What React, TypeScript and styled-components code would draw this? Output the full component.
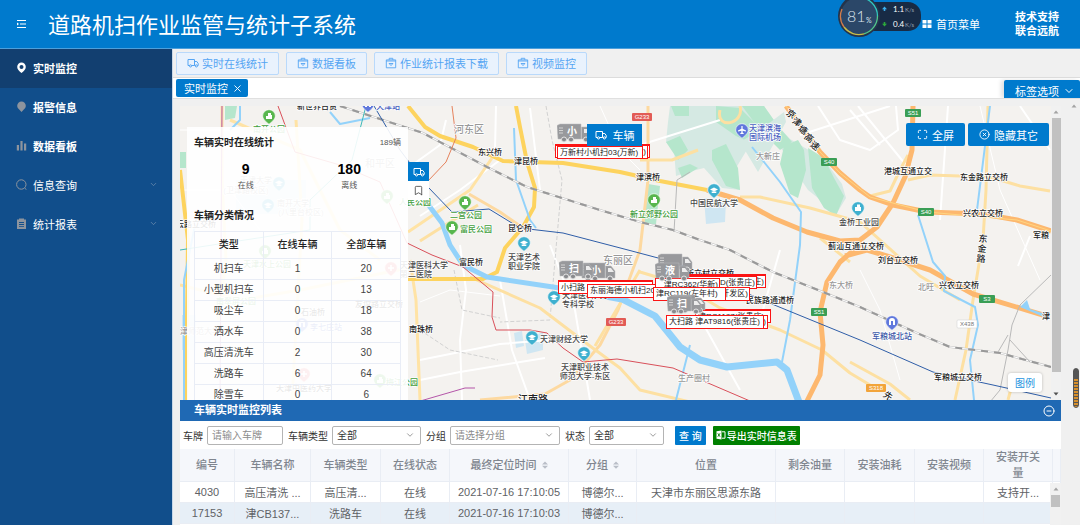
import React from 'react';
import styled, { createGlobalStyle, css } from 'styled-components';
import { ChevronDown, CircleX, CircleMinus, Maximize, Truck, X, Bookmark } from 'lucide-react';

const BLUE = '#007acd';
const FONT = '"Liberation Sans", "Noto Sans CJK SC", sans-serif';

const GlobalStyle = createGlobalStyle`
  *, *::before, *::after { box-sizing: border-box; }
  body { margin: 0; font-family: ${FONT}; font-size: 11px; color: #606266; background: #f0f0f0; }
  button, input, select { font-family: inherit; font-size: inherit; color: inherit; margin: 0; }
  a { color: inherit; text-decoration: none; }
  svg { display: block; flex: none; }
  h1, h2, p { margin: 0; }
`;

/* ---------- page shell ---------- */

const Page = styled.div`
  display: flex;
  flex-direction: column;
  height: 100vh;
  overflow: hidden;
`;

const Header = styled.header`
  flex: none;
  display: flex;
  align-items: center;
  height: 49px;
  padding: 0 21px 0 16px;
  color: #fff;
  background: ${BLUE};
  border-bottom: 1px solid #4c9fdb;
`;

const MenuToggle = styled.button`
  width: 32px;
  padding: 0;
  border: 0;
  background: none;
  color: #fff;
`;

const Title = styled.h1`
  flex: 1;
  font-size: 22px;
  line-height: 32px;
  font-weight: 400;
  padding-top: 4px;
  white-space: nowrap;
`;

const HomeLink = styled.a`
  display: flex;
  align-items: center;
  gap: 4px;
  margin-right: 35px;
`;

const Support = styled.p`
  width: 44px;
  font-weight: 700;
  line-height: 14px;
`;

const Body = styled.div`
  flex: 1;
  min-height: 0;
  display: flex;
`;

const Sidebar = styled.nav`
  flex: none;
  width: 172px;
  background: #114e8b;
`;

const SideItem = styled.a<{ $active?: boolean; $bold?: boolean }>`
  display: flex;
  align-items: center;
  gap: 6px;
  height: 39px;
  padding: 0 14px 2px 16px;
  color: #fff;
  font-weight: ${(p) => (p.$bold ? 700 : 400)};
  background: ${(p) => (p.$active ? '#123f70' : 'transparent')};
  > span { flex: 1; }
`;

const Main = styled.main`
  flex: 1;
  min-width: 0;
  display: flex;
  flex-direction: column;
  border-left: 1px solid #c9d8e8;
`;

const Toolbar = styled.div`
  flex: none;
  display: flex;
  gap: 7px;
  height: 29px;
  padding: 3px;
  border-bottom: 1px solid #dcdcdc;
`;

const ToolButton = styled.button`
  display: flex;
  align-items: center;
  gap: 3px;
  height: 23px;
  padding: 0 10px 1px;
  border: 1px solid #b9d9fb;
  border-radius: 2px;
  background: #e9f2fd;
  color: #55a5f3;
  white-space: nowrap;
`;

const TabBar = styled.div`
  flex: none;
  display: flex;
  align-items: center;
  justify-content: space-between;
  height: 21px;
  padding-left: 3px;
  background: #fff;
  border-bottom: 1px solid #e0e0e0;
  overflow: hidden;
`;

const Tab = styled.button`
  display: flex;
  align-items: center;
  gap: 4px;
  height: 18px;
  padding: 0 5px 0 8px;
  border: 0;
  border-radius: 2px;
  background: ${BLUE};
  color: #fff;
`;

const TabOptions = styled.button`
  align-self: flex-end;
  display: flex;
  align-items: center;
  gap: 4px;
  height: 18px;
  padding: 4px 5px 0 11px;
  border: 0;
  border-radius: 2px 2px 0 0;
  background: ${BLUE};
  color: #fff;
  box-shadow: -3px 0 4px rgba(0, 0, 0, 0.12);
`;

const Content = styled.div`
  flex: 1;
  min-height: 0;
  display: flex;
`;

const Workspace = styled.div`
  flex: 1;
  min-width: 0;
  display: flex;
  flex-direction: column;
  padding: 7px 0 0 7px;
`;

const Gutter = styled.div`
  flex: none;
  width: 19px;
  display: flex;
  justify-content: flex-end;
  padding: 5px 3px 0 0;
`;

/* ---------- map ---------- */

const MapRow = styled.section`
  flex: 1;
  min-height: 0;
  display: flex;
`;

const MapCanvas = styled.div`
  position: relative;
  flex: 1;
  min-width: 0;
  overflow: hidden;
  background: #f4f2ef;
`;

const MapDrawing = styled.svg`
  width: 100%;
  height: 100%;
  font-family: ${FONT};
  font-size: 8px;
`;

const ScrollTrack = styled.div`
  flex: none;
  display: flex;
  flex-direction: column;
  align-items: center;
  justify-content: space-between;
  width: 10px;
  padding: 4px 0;
  background: #f1f1f1;
`;

const ScrollThumb = styled.div`
  width: 9px;
  flex: 1;
  margin: 4px 0 20px;
  background: #c1c1c1;
`;

const MapActions = styled.div`
  position: absolute;
  top: 17px;
  right: 2px;
  display: flex;
  gap: 3px;
`;

const MapButton = styled.button`
  display: flex;
  align-items: center;
  gap: 4px;
  height: 23px;
  padding: 0 11px;
  border: 0;
  border-radius: 2px;
  background: ${BLUE};
  color: #fff;
  white-space: nowrap;
`;

const Legend = styled.button`
  position: absolute;
  right: 9px;
  bottom: 8px;
  height: 19px;
  padding: 0 7px;
  border: 0;
  border-radius: 3px;
  background: #fff;
  color: #1c94e0;
  font-size: 10px;
  box-shadow: 0 0 3px rgba(0, 0, 0, 0.25);
`;

const VehicleMenu = styled.button`
  position: absolute;
  left: 407px;
  top: 18px;
  display: flex;
  align-items: center;
  justify-content: center;
  gap: 6px;
  width: 55px;
  height: 22px;
  border: 0;
  padding: 0;
  background: ${BLUE};
  color: #fff;
`;

const VehicleTag = styled.div<{ $x: number; $y: number; $w: number; $heavy?: boolean }>`
  position: absolute;
  left: ${(p) => p.$x}px;
  top: ${(p) => p.$y}px;
  width: ${(p) => p.$w}px;
  height: 14px;
  padding-left: 2px;
  border: 1px solid #fb1414;
  ${(p) => p.$heavy && css`border-top-width: 2px;`}
  background: #fff;
  color: #222;
  font-size: 8px;
  line-height: 12px;
  white-space: nowrap;
  overflow: hidden;
`;

const RightTag = styled(VehicleTag)`
  text-align: right;
  padding-right: 1px;
`;

const VehiclePin = styled.svg<{ $x: number; $y: number }>`
  position: absolute;
  left: ${(p) => p.$x}px;
  top: ${(p) => p.$y}px;
  font-family: ${FONT};
`;

/* ---------- statistics card ---------- */

const StatsCard = styled.aside`
  position: absolute;
  left: 7px;
  top: 21px;
  bottom: 0;
  width: 221px;
  padding: 8px 7px 0;
  overflow: hidden;
  background: rgba(255, 255, 255, 0.9);
`;

const CardHead = styled.div`
  display: flex;
  justify-content: space-between;
  align-items: center;
  height: 16px;
`;

const CardTitle = styled.h2`
  font-size: 10px;
  line-height: 16px;
  font-weight: 700;
  color: #222;
`;

const Totals = styled.div`
  display: grid;
  grid-template-columns: 1fr 1fr;
  text-align: center;
  padding: 9px 0 14px;
`;

const TotalValue = styled.p`
  font-size: 14px;
  line-height: 18px;
  font-weight: 700;
  color: #000;
`;

const Small = styled.p`
  font-size: 8px;
  line-height: 16px;
  color: #555;
`;

const StatsTable = styled.table`
  width: 100%;
  margin-top: 7px;
  table-layout: fixed;
  border-collapse: collapse;
  font-size: 10px;
  line-height: 14px;
  color: #444;
  text-align: center;
  th, td { border: 1px solid #e9edf6; padding: 0 0 1px; height: 21px; }
  th { height: 27px; font-weight: 500; color: #222; }
`;

const SideTabs = styled.div`
  position: absolute;
  left: 228px;
  top: 56px;
  display: flex;
  flex-direction: column;
`;

const SideTab = styled.button<{ $on?: boolean }>`
  display: flex;
  align-items: center;
  justify-content: center;
  width: 21px;
  height: 19px;
  padding: 0;
  border: 0;
  background: ${(p) => (p.$on ? BLUE : '#fff')};
  color: ${(p) => (p.$on ? '#fff' : '#555')};
`;

/* ---------- live list ---------- */

const ListPanel = styled.section`
  position: relative;
  flex: none;
  padding-bottom: 1px;
  background: #fff;
`;

const ListHead = styled.div`
  display: flex;
  align-items: center;
  justify-content: space-between;
  height: 21px;
  padding: 0 6px 0 14px;
  background: #1f69b4;
  color: #fff;
`;

const ListTitle = styled.h2`
  font-size: 11px;
  line-height: 16px;
  padding-bottom: 2px;
`;

const IconButton = styled.button`
  padding: 0;
  border: 0;
  background: none;
  color: #fff;
`;

const Filters = styled.form`
  display: flex;
  align-items: center;
  height: 28px;
  padding-left: 3px;
  font-size: 10px;
  color: #333;
`;

const Field = styled.label`
  display: flex;
  align-items: center;
  gap: 4px;
  margin-right: 5px;
  white-space: nowrap;
`;

const control = css`
  height: 19px;
  padding: 0 4px;
  border: 1px solid #b4b4b4;
  border-radius: 2px;
  background: #fff;
  outline: 0;
`;

const TextInput = styled.input`
  ${control}
  width: 76px;
  &::placeholder { color: #8c8c8c; opacity: 1; }
`;

const SelectWrap = styled.span`
  display: grid;
  align-items: center;
  > * { grid-area: 1 / 1; }
  > svg { justify-self: end; margin-right: 6px; pointer-events: none; color: #888; }
`;

const SelectBox = styled.select<{ $w: number; $muted?: boolean }>`
  ${control}
  appearance: none;
  width: ${(p) => p.$w}px;
  color: ${(p) => (p.$muted ? '#8c8c8c' : '#333')};
`;

const ActionButton = styled.button<{ $color: string; $pad: number }>`
  display: flex;
  align-items: center;
  gap: 1px;
  height: 19px;
  margin-left: ${(p) => (p.$pad === 4 ? 6 : 7)}px;
  padding: 0 ${(p) => p.$pad}px;
  border: 0;
  border-radius: 1px;
  background: ${(p) => p.$color};
  color: #fff;
  font-weight: 500;
  white-space: nowrap;
`;

const ListTable = styled.table`
  width: 100%;
  table-layout: fixed;
  border-collapse: separate;
  border-spacing: 0;
  text-align: center;
  color: #606266;
  th, td { padding: 0 5px; border-right: 1px solid #e9edf4; }
  th { height: 33px; padding: 0 10px; background: #f5f7fb; font-weight: 500; line-height: 16px; color: #80868f; border-bottom: 1px solid #e9edf4; }
  td { height: 21px; overflow: hidden; white-space: nowrap; border-bottom: 1px solid #e9edf4; }
  tbody tr:nth-child(even) td { background: #e7eff7; }
`;

const HeadCell = styled.span`
  display: inline-flex;
  align-items: center;
  gap: 5px;
`;

const ListScroll = styled.div`
  position: absolute;
  right: 0;
  top: 83px;
  bottom: 0;
  width: 11px;
  display: flex;
  flex-direction: column;
  align-items: center;
  gap: 4px;
  padding-top: 4px;
  background: #f1f1f1;
`;

const ListThumb = styled.div`
  width: 9px;
  height: 12px;
  background: #c1c1c1;
`;

/* ---------- floating system widgets ---------- */

const SpeedWidget = styled.div`
  position: absolute;
  left: 838px;
  top: 0;
`;

const SideHandle = styled.div`
  position: absolute;
  right: 1px;
  top: 368px;
  width: 6px;
  height: 40px;
  border-radius: 3px;
  border: 1px solid #555;
  background: linear-gradient(#555 0 9px, transparent 9px), repeating-linear-gradient(#555 0 1px, #d68f2c 1px 3px);
`;

/* ---------- small drawings ---------- */

const Arrow = ({ down }: { down?: boolean }) => (
  <svg width="6" height="4" viewBox="0 0 6 4">
    <path d={down ? 'M0.5 0.5h5L3 3.5z' : 'M0.5 3.5h5L3 0.5z'} fill={down ? '#505050' : '#a3a3a3'} />
  </svg>
);

const SortIcon = () => (
  <svg width="6" height="8" viewBox="0 0 6 8" fill="#b9bec7">
    <path d="M0 3.4h6L3 0.4zM0 4.8h6L3 7.8z" />
  </svg>
);

const FoldIcon = () => (
  <svg width="11" height="10" viewBox="0 0 11 10" fill="none" stroke="#fff" strokeWidth="1.1">
    <path d="M1 1.5h9M4 5h6M1 8.5h9" />
    <path d="M1 3.4 3 5 1 6.6z" fill="#fff" stroke="none" />
  </svg>
);

const GridIcon = () => (
  <svg width="10" height="10" viewBox="0 0 10 10" fill="#fff">
    <path d="M0.5 1h4v3.5h-4zM5.5 1h4v3.5h-4zM0.5 5.5h4v3.5h-4zM5.5 5.5h4v3.5h-4z" />
  </svg>
);

const BoxIcon = () => (
  <svg width="12" height="12" viewBox="0 0 12 12" fill="none" stroke="currentColor" strokeWidth="0.9">
    <path d="M1.3 4h9.4v6.8H1.3zM1.3 4V2.900h9.4V4M4.200 2.900V1.300h3.600v1.600M3.800 6.500h4.400M4.500 6.500c0 2.200 3 2.200 3 0" />
  </svg>
);

const VanIcon = ({ size }: { size: number }) => (
  <svg width={size} height={size} viewBox="0 0 12 12" fill="none" stroke="currentColor" strokeWidth="1">
    <path d="M2.200 8.500H1V2.500h6.500v6H4.800M7.500 4.500h2.300L11.200 6.500v2h-.6M8.300 8.500H7.500" />
    <circle cx="3.500" cy="8.900" r="1.100" />
    <circle cx="9.400" cy="8.900" r="1.100" />
  </svg>
);

const sideIcons: Record<string, React.ReactNode> = {
  pin: <path fill="#fff" fillRule="evenodd" d="M5.5 0.6a4.3 4.3 0 0 1 4.3 4.3c0 2.6-2.2 4.3-4.3 6C3.400 9.200 1.200 7.500 1.200 4.900A4.300 4.300 0 0 1 5.500 0.600zM5.500 3.100a2 2 0 1 0 0 4 2 2 0 0 0 0-4z" />,
  bulb: <path fill="#8d949e" d="M5.500 0.500a4.300 4.300 0 0 1 4.300 4.300c0 1.700-1 2.900-2 3.700L5.500 11 3.200 8.500c-1-.8-2-2-2-3.700A4.300 4.300 0 0 1 5.500 0.500z" />,
  bars: <path fill="#8d949e" d="M0.800 5h2.200v5.500H0.800zM4.400 1h2.200v9.500H4.400zM8 3.500h2.200v7H8z" />,
  search: <g fill="none" stroke="#8d949e" strokeWidth="1"><circle cx="5.300" cy="5.500" r="4.700" /><path d="M8.700 9 10.500 10.800" /></g>,
  clip: <path fill="#8d949e" fillRule="evenodd" d="M1 1.500h2V0.500h5v1h2V11H1zM3 4v.9h5V4zM3 6.100V7h5v-.9zM3 8.200v.9h5v-.9z" />,
};

const SideIcon = ({ name }: { name: string }) => (
  <svg width="11" height="11" viewBox="0 0 11 11">{sideIcons[name]}</svg>
);

const ExcelIcon = () => (
  <svg width="10" height="10" viewBox="0 0 10 10" fill="none" stroke="#fff">
    <path d="M0.500 1.300 5.500 0.400v9.200L0.500 8.700z" fill="#fff" stroke="none" />
    <path d="M1.800 3.300 4 6.700M4 3.300 1.800 6.700" stroke="#008000" strokeWidth="0.900" />
    <path d="M6 1.800h3v6.400H6" strokeWidth="1" />
  </svg>
);

const SpeedGauge = () => (
  <svg width="84" height="38" viewBox="838 0 84 38" fontFamily="Lato, sans-serif">
    <rect x="850" y="2" width="71" height="29" rx="13" fill="#182b45" />
    <circle cx="859" cy="16" r="21" fill="#24344b" />
    <circle cx="859" cy="16" r="18.500" fill="#2b4768" />
    <path d="M859-2.500A18.500 18.500 0 0 1 877.500 16" fill="none" stroke="#31c9c0" strokeWidth="1.300" />
    <path d="M877.500 16A18.500 18.500 0 0 1 864 33.800" fill="none" stroke="#53c78b" strokeWidth="1.300" />
    <path d="M864 33.800A18.500 18.500 0 0 1 844 27" fill="none" stroke="#c9bd49" strokeWidth="1.300" />
    <path d="M844 27A18.500 18.500 0 0 1 842 9" fill="none" stroke="#d27c4c" strokeWidth="1.300" />
    <text x="847" y="22" fontSize="16" fill="#dbe4ee" fontWeight="300">81</text>
    <text x="866" y="23" fontSize="7" fill="#dbe4ee">%</text>
    <path d="M884.500 6.500 887 9.300h-1.700V11h-1.600V9.300H882z" fill="#3db0ee" />
    <path d="M884.500 26.500 882 23.700h1.700V22h1.600v1.700H887z" fill="#2da83c" />
    <text x="893" y="12" fontSize="8" fill="#fff">1.1</text>
    <text x="893" y="27" fontSize="8" fill="#fff">0.4</text>
    <text x="905" y="12" fontSize="6" fill="#94a0b0">K/s</text>
    <text x="905" y="27" fontSize="6" fill="#94a0b0">K/s</text>
  </svg>
);

/* ---------- map data ---------- */

type Label = [string, number, number, string?, number?];

const BLACK = '#222';
const DARK = '#484848';
const GREY = '#999';
const GREEN = '#3f9d3b';
const INDIGO = '#4a5fc0';

const labels: Label[] = [
  ['新世界百货', 317, 109], ['天津站', 388, 109, INDIGO], ['南开公园', 269, 132, GREEN],
  ['和平区', 380, 167, GREY, 10], ['天津大学', 256, 183, GREY], ['(卫津路校区)', 246, 193, GREY],
  ['南开大学', 293, 206, GREY], ['(八里台校区)', 301, 215, GREY], ['李七庄站', 326, 330, INDIGO],
  ['天津水上公园', 267, 267, GREEN], ['南翠屏公园', 236, 304, GREEN], ['石油桥', 313, 315],
  ['友谊路立交桥', 379, 307], ['天津中医药大学', 304, 391], ['梅江公园', 402, 385, GREEN],
  ['密云路立交桥', 192, 227], ['天津师范大学', 196, 334, GREY], ['人民公园', 415, 205, GREEN],
  ['河东区', 469, 133, GREY, 10], ['东兴桥', 490, 155], ['津昆桥', 526, 164], ['津滨桥', 648, 180],
  ['二宫公园', 466, 218, GREEN], ['富民公园', 476, 232, GREEN], ['昆仑桥', 520, 231],
  ['天津艺术', 524, 260, DARK], ['职业学院', 524, 269, DARK], ['富民桥', 471, 265],
  ['天津医科大学', 424, 268, DARK], ['第二医院', 416, 277, DARK], ['东丽区', 618, 264, GREY, 10],
  ['天津医科大学', 586, 298, DARK], ['专科学校', 578, 307, DARK], ['南珠桥', 421, 332], ['天津财经大学', 564, 342, DARK],
  ['天津职业技术', 585, 370, DARK], ['师范大学-东区', 585, 379, DARK], ['江南路', 533, 403, BLACK, 10],
  ['新立郊野公园', 654, 217, GREEN], ['中国民航大学', 714, 206, DARK], ['天津滨海', 765, 131, INDIGO],
  ['国际机场', 765, 140, INDIGO], ['大新庄', 768, 159, GREY], ['金桥工业园', 859, 225, DARK],
  ['新立村立交桥', 710, 276], ['蓟汕互通立交桥', 856, 249], ['港城互通立交', 908, 174],
  ['东金路立交桥', 984, 180], ['兴农立交桥', 983, 216], ['军粮', 1041, 238], ['刘台立交桥', 898, 263],
  ['北旺', 926, 290, GREY], ['兴农立交桥', 959, 288], ['民族路通道桥', 770, 303], ['东大桥', 841, 288, GREY],
  ['生产圈村', 694, 381, GREY], ['军粮城北站', 892, 339, '#3d58a8'], ['军粮城立交桥', 958, 380], ['津', 1046, 319, BLACK],
];

const roadChars: [string, number, number, number][] = [
  ['京', 791, 114, 32], ['津', 797, 122, 32], ['塘', 803, 130, 32], ['高', 809, 138, 35], ['速', 815, 146, 38],
  ['东', 983, 239, 5], ['金', 982, 249, 5], ['路', 981, 259, 5], ['先', 888, 396, 35],
];

const badges: [string, number, number, string][] = [
  ['G233', 642, 117, '#e25b55'], ['G233', 616, 322, '#e25b55'], ['S51', 913, 113, '#3a9e55'],
  ['S40', 829, 162, '#3a9e55'], ['S40', 926, 212, '#3a9e55'], ['S51', 819, 312, '#3a9e55'],
  ['S3', 987, 299, '#3a9e55'], ['X438', 967, 324, '#ffffff'], ['S318', 876, 388, '#f2a43a'],
];

const pois: [number, number, string, string][] = [
  [269, 117, '#58b64e', 'tree'], [465, 203, '#58b64e', 'tree'], [452, 228, '#58b64e', 'tree'],
  [654, 201, '#58b64e', 'tree'], [387, 197, '#58b64e', 'tree'], [265, 252, '#58b64e', 'tree'], [380, 381, '#58b64e', 'tree'],
  [524, 244, '#3fb0cf', 'cap'], [554, 298, '#3fb0cf', 'cap'], [532, 338, '#3fb0cf', 'cap'],
  [584, 354, '#3fb0cf', 'cap'], [714, 191, '#3fb0cf', 'cap'], [279, 184, '#3fb0cf', 'cap'], [268, 206, '#3fb0cf', 'cap'],
  [858, 209, '#3fb0cf', 'town'], [742, 131, '#6078dc', 'plane'], [892, 323, '#6078dc', 'rail'],
  [302, 325, '#6078dc', 'rail'], [368, 105, '#6078dc', 'rail'], [391, 269, '#e86a70', 'plus'], [304, 375, '#e86a70', 'plus'],
];

const glyphs: Record<string, string> = {
  tree: 'M-3 3V0h2v-3h3v2h1v4zM-2 3.500h5',
  cap: 'M-4-.5 0-2.500 4-.5 0 1.500zM-2.300 1.500v1.500h4.600V1.500z',
  town: 'M-3 3V-1h2v-2.500h3V-1h1v4z',
  plane: 'M-.6-4h1.200v2.800L4 .5v1L.600.800v1.700l1.200 1v.6h-3.600v-.6l1.200-1V.800L-4 1.500v-1l3.400-1.700z',
  rail: 'M-3 3V-1a3 3 0 0 1 6 0v4H1V-1h-2v4z',
  plus: 'M-.8-3h1.600v2.200H3v1.600H.800V3H-.8V.800H-3V-.8h2.200z',
};

const Road = ({ d, w = 2, c = '#fde0a2' }: { d: string; w?: number; c?: string }) => (
  <path d={d} fill="none" stroke={c} strokeWidth={w} strokeLinejoin="round" />
);

const Rail = ({ d }: { d: string }) => (
  <g fill="none">
    <path d={d} stroke="#c4c4c4" strokeWidth="2.200" />
    <path d={d} stroke="#fff" strokeWidth="1" />
    <path d={d} stroke="#999" strokeWidth="2" strokeDasharray="7 6" />
  </g>
);

const Vehicle = ({ x, y, t }: { x: number; y: number; t?: string }) => (
  <VehiclePin $x={x} $y={y} width="36" height="20" viewBox="0 0 36 20">
    <path d="M0 2.500 3 1h21v15H1zM24.500 4h5.500l4 5v7h-9.500z" fill="#98999c" stroke="#b9babc" strokeWidth="0.500" />
    <path d="M27 6h3l3 4h-6z" fill="#ececec" />
    <path d="M2 5h4M2 7.500h4M2 10h4" stroke="#d2d2d2" strokeWidth="1" />
    <g fill="#8a8b8e" stroke="#e4e4e4">
      <circle cx="7" cy="16.500" r="2.500" />
      <circle cx="14" cy="16.500" r="2.500" />
      <circle cx="29" cy="16.500" r="2.500" />
    </g>
    {t && <text x="15" y="12" fontSize="10" fontWeight="700" fill="#fff" textAnchor="middle">{t}</text>}
  </VehiclePin>
);

const CityMap = () => (
  <MapDrawing viewBox="180 106 871 294" preserveAspectRatio="xMinYMin slice">
    <rect x="180" y="106" width="2000" height="1200" fill="#f4f2ef" />

    <g fill="#d5e9e3">
      <path d="M670 106H764L778 126 790 139 812 152 826 162 842 184 846 198 837 213 828 206 808 190 800 178 792 162 774 140 748 148 736 168 740 190 722 188 704 168 688 172 676 176 674 150 666 142 668 122z" />
    </g>
    <g fill="#b5e6cc">
      <path d="M671 106h18v10h-14zM666 142l14-6 8 14-10 10zM716 106l24 2 14 14 24 18-16 8-26-12-20-14zM712 150l14-6 12 24 2 22-14-4-14-26z" />
      <path d="M742 106h22l14 20 14 16-12 8-20-20zM784 146l14-6 6 10 2 20-8 28-8-4-10-30zM808 148l16 10 10 20 10 18-8 20-12-8-12-20z" />
      <path d="M678 168l12-4 8 4-16 10zM648 184l12 2-4 38h-12zM225 106h12l-2 12-10 2zM180 152h6v16h-6z" />
    </g>
    <path d="M704 198l22 2-1 22-19 2zM525 340l18-8v18l-16 4zM514 333l8-2 2 15-8 2zM236 180h70v34h-70zM182 315h14v35h-14z" fill="#cfe6f2" />
    <path d="M784 112 786 122 758 172 740 142 760 130z" fill="#d5e9e3" />

    <g>
      <Road c="#ffffff" w={2} d="M408 168 440 145 446 120M495 150 496 106M420 216 460 190 500 160M530 108 540 190M460 245 466 290 460 340 462 400M420 360 500 344 550 340M420 380 460 372 545 358M500 280 512 350 530 400M640 145 720 120M818 106 840 140 870 150 898 130 896 106M800 135 890 106M858 106 910 170M948 106 940 220M1020 106 1050 150M1030 236 1018 266M850 110 880 145M550 245 575 310 590 400M690 300 740 390M780 250 760 320" />
      <Road c="#ffffff" w={1} d="M180 130H230M180 190H230L260 230M420 302 450 290 500 296M600 106 620 150 640 170M860 270 880 310 900 380M980 106 1000 190 1040 280" />
      <g strokeDasharray="4 2">
        <Road c="#d2d2d2" w={1} d="M546 106 552 140 562 180 555 260 550 320 500 322M454 270 462 310 500 318M420 330 450 350 498 360" />
      </g>
      <Road c="#ffe3a5" w={3} d="M180 285 240 300 300 290 408 268M222 106V180L226 260 218 320M230 120 300 150 340 230 380 260M296 120 302 220 292 400M410 260 416 300 420 400M408 232 470 190 492 158" />
      <Road c="#fdd9a0" w={3} d="M469 194 500 212 523 228M648 106V180L640 250 618 310 600 345 570 380 545 394 480 400" />
      <Road w={3} d="M640 160H672L698 150M720 110C715 130 745 125 740 106M420 241 450 222 478 205M470 277 540 308 590 346 620 368 640 390 690 402M640 272 680 284 720 308 780 330 822 350 850 373 870 385M740 197 760 197 810 208 860 222 920 276 960 300M850 362 890 384 910 400M988 106 986 190 983 240 973 300 966 350 955 400M908 180 930 175 990 177 1020 186 1050 191M870 196 890 191 900 170 908 155M595 346 640 270M1012 385 1008 400M820 238 850 262" />
      <Road c="#fdd35e" w={4} d="M408 106 425 127 440 136 473 147 503 161 563 163 620 172 660 181 707 190" />
      <Road c="#fdd35e" w={4} d="M516 106 520 127 527 162 535 188 534 207 523 227 505 248 497 272 483 279H408M180 170 188 240 186 400" />
      <Road c="#fdb86f" w={5} d="M707 190 740 200 773 218 807 232 840 241 860 240 877 227 893 203 905 177 912 150 913 106M786 106 820 152 840 173 860 190 870 197 893 205 927 212 983 214 1017 220 1051 231M862 243 840 262 827 282 820 312 823 345 820 375 807 401M845 256 867 250 890 257 930 270 973 294 1043 315" />
      <Road c="#ffd681" w={1} d="M786 106 820 152 840 173 870 197 927 212 1017 220 1051 231" />
    </g>

    <Road c="#93d2fa" w={5} d="M424 196 430 207 442 223 450 245 463 265 487 277 553 287 590 293" />
    <Road c="#93d2fa" w={7} d="M590 293 622 299 655 316 680 347 700 360 727 367 777 362 787 370 799 402" />
    <Road c="#93d2fa" w={2} d="M514 128 516 180 530 220 536 228M752 147 780 182 801 212 800 245 790 320 782 362M918 215 933 262 945 276 944 291 975 307 978 325 970 360 974 400M990 106 977 210M690 345 676 400M330 112 340 124 370 118M184 400V280L196 220M240 106 240 120 230 130" />
    <path d="M1020 307 1027 300 1030 309 1045 314 1044 317z" fill="#93d2fa" />

    <Rail d="M340 106 423 133 487 167 527 187 600 210 640 222 673 230 700 240 730 250 773 272 813 288 860 307 917 333 950 347 1000 353 1051 367" />
    <Road c="#b9b9b9" w={1} d="M1051 275 1020 305 1012 325 1008 350 1000 390 990 402M1008 335 998 352M1010 340 1030 362M674 232 677 180 690 172" />

    <g>
      <Road c="#2f5ea8" w={1} d="M374 106 400 150 428 187 452 212 489 209 520 228 563 233 628 250 677 263 767 302 860 340 933 372 993 385 1051 398" />
      <Road c="#d9505a" w={1} d="M278 106 295 152 340 165 380 182 407 243 432 255 463 267 493 292 492 317 496 330 530 330 547 333 563 348 583 362 617 359 673 368 750 401" />
      <Road c="#e5825c" w={1} d="M452 106 456 138 446 162 428 181" />
      <Road c="#b455a8" w={1} d="M222 106 220 400M410 404 465 388H475" />
      <Road c="#3db9b9" w={1} d="M366 106 352 160 310 200 310 230 180 250" />
    </g>

    {pois.map(([x, y, color, kind]) => (
      <g key={`${x}-${y}`} transform={`translate(${x} ${y})`}>
        <path d="M-6.300-1a6.300 6.300 0 1 1 12.600 0c0 3-3 5.500-6.300 8.300C-3.300 4.500-6.300 2-6.300-1z" fill={color} stroke="#fff" strokeWidth="0.600" />
        <path d={glyphs[kind]} fill="#fff" transform="translate(0 -1)" />
      </g>
    ))}

    {badges.map(([t, x, y, color]) => {
      const white = color === '#ffffff';
      const w = t.length > 3 ? 20 : 16;
      return (
        <g key={`${x}-${y}`}>
          <rect x={x - w / 2} y={y - 4} width={w} height="8" rx="1" fill={color} stroke={white ? '#ccc' : 'none'} strokeWidth="0.500" />
          <text x={x} y={y + 2} fontSize="6" textAnchor="middle" fill={white ? '#777' : '#fff'}>{t}</text>
        </g>
      );
    })}

    <g textAnchor="middle" stroke="#fff" strokeWidth="1.500" strokeLinejoin="round" fontWeight="500">
      {labels.map(([t, x, y, fill = BLACK, size = 8], i) => (
        <text key={i} x={x} y={y} fill={fill} fontSize={size} paintOrder="stroke">{t}</text>
      ))}
      {roadChars.map(([t, x, y, turn], i) => (
        <text key={i} transform={`translate(${x} ${y}) rotate(${turn})`} y="3" fill={BLACK} fontSize="9" paintOrder="stroke">{t}</text>
      ))}
    </g>
  </MapDrawing>
);

/* ---------- table data ---------- */

const stats: [string, number, number][] = [
  ['机扫车', 1, 20], ['小型机扫车', 0, 13], ['吸尘车', 0, 18], ['洒水车', 0, 38],
  ['高压清洗车', 2, 30], ['洗路车', 6, 64], ['除雪车', 0, 6],
];

const columns: { name: string; width: number; sort?: boolean }[] = [
  { name: '编号', width: 55 }, { name: '车辆名称', width: 76 }, { name: '车辆类型', width: 70 },
  { name: '在线状态', width: 69 }, { name: '最终定位时间', width: 119, sort: true },
  { name: '分组', width: 68, sort: true }, { name: '位置', width: 139 }, { name: '剩余油量', width: 69 },
  { name: '安装油耗', width: 70 }, { name: '安装视频', width: 69 }, { name: '安装开关量', width: 69 }, { name: '', width: 8 },
];

const rows: string[][] = [
  ['4030', '高压清洗 ...', '高压清...', '在线', '2021-07-16 17:10:05', '博德尔...', '天津市东丽区思源东路', '', '', '', '支持开...', ''],
  ['17153', '津CB137...', '洗路车', '在线', '2021-07-16 17:10:03', '博德尔...', '', '', '', '', '', ''],
];

const menu = [
  { name: '实时监控', icon: 'pin', bold: true, active: true },
  { name: '报警信息', icon: 'bulb', bold: true },
  { name: '数据看板', icon: 'bars', bold: true },
  { name: '信息查询', icon: 'search', more: true },
  { name: '统计报表', icon: 'clip', more: true },
];

const Pick = ({ width, muted, text, label }: { width: number; muted?: boolean; text: string; label: string }) => (
  <Field>
    {label}
    <SelectWrap>
      <SelectBox $w={width} $muted={muted}><option>{text}</option></SelectBox>
      <ChevronDown size={10} strokeWidth={2} />
    </SelectWrap>
  </Field>
);

export default function App() {
  return (
    <Page>
      <GlobalStyle />
      <Header>
        <MenuToggle type="button" aria-label="菜单"><FoldIcon /></MenuToggle>
        <Title>道路机扫作业监管与统计子系统</Title>
        <HomeLink href="#home"><GridIcon />首页菜单</HomeLink>
        <Support>技术支持<br />联合远航</Support>
      </Header>

      <Body>
        <Sidebar>
          {menu.map((m) => (
            <SideItem key={m.name} href="#menu" $active={m.active} $bold={m.bold}>
              <SideIcon name={m.icon} />
              <span>{m.name}</span>
              {m.more && <ChevronDown size={9} strokeWidth={2} color="#6f8db0" />}
            </SideItem>
          ))}
        </Sidebar>

        <Main>
          <Toolbar>
            <ToolButton type="button"><VanIcon size={12} />实时在线统计</ToolButton>
            <ToolButton type="button"><BoxIcon />数据看板</ToolButton>
            <ToolButton type="button"><BoxIcon />作业统计报表下载</ToolButton>
            <ToolButton type="button"><BoxIcon />视频监控</ToolButton>
          </Toolbar>
          <TabBar>
            <Tab type="button">实时监控<X size={11} strokeWidth={2} /></Tab>
            <TabOptions type="button">标签选项<ChevronDown size={12} strokeWidth={2} /></TabOptions>
          </TabBar>

          <Content>
            <Workspace>
              <MapRow>
                <MapCanvas>
                  <CityMap />

                  <Vehicle x={377} y={17} t="小" />
                  <VehicleTag $x={375} $y={38} $w={95} $heavy />
                  <RightTag $x={377} $y={39} $w={91}>)</RightTag>
                  <VehicleTag $x={377} $y={39} $w={86} $heavy>万新村小机扫03(万新)</VehicleTag>
                  <VehicleMenu type="button"><VanIcon size={12} />车辆</VehicleMenu>

                  <Vehicle x={401} y={156} t="小" />
                  <Vehicle x={379} y={154} t="扫" />
                  <VehicleTag $x={378} $y={174} $w={95} $heavy>小扫路</VehicleTag>
                  <VehicleTag $x={407} $y={178} $w={74}>东丽海德小机扫20</VehicleTag>

                  <RightTag $x={505} $y={168} $w={81} $heavy>庄)</RightTag>
                  <RightTag $x={500} $y={169} $w={77} $heavy>D(张贵庄)</RightTag>
                  <RightTag $x={475} $y={172} $w={65}>津RC362(华新)</RightTag>
                  <Vehicle x={478} y={147} />
                  <Vehicle x={475} y={156} t="液" />
                  <RightTag $x={473} $y={181} $w={97}>开发区)</RightTag>
                  <VehicleTag $x={473} $y={181} $w={73}>津RC119(左年村)</VehicleTag>

                  <VehicleTag $x={515} $y={203} $w={76} $heavy>津RC1187(张贵庄)</VehicleTag>
                  <Vehicle x={491} y={188} />
                  <Vehicle x={487} y={189} t="扫" />
                  <RightTag $x={487} $y={209} $w={101}>)</RightTag>
                  <VehicleTag $x={486} $y={209} $w={98}>大扫路 津AT9816(张贵庄)</VehicleTag>

                  <StatsCard>
                    <CardHead><CardTitle>车辆实时在线统计</CardTitle><Small>189辆</Small></CardHead>
                    <Totals>
                      <div><TotalValue>9</TotalValue><Small>在线</Small></div>
                      <div><TotalValue>180</TotalValue><Small>离线</Small></div>
                    </Totals>
                    <CardTitle>车辆分类情况</CardTitle>
                    <StatsTable>
                      <thead><tr><th>类型</th><th>在线车辆</th><th>全部车辆</th></tr></thead>
                      <tbody>
                        {stats.map(([name, on, all]) => (
                          <tr key={name}><td>{name}</td><td>{on}</td><td>{all}</td></tr>
                        ))}
                      </tbody>
                    </StatsTable>
                  </StatsCard>
                  <SideTabs>
                    <SideTab type="button" $on aria-label="车辆"><VanIcon size={12} /></SideTab>
                    <SideTab type="button" aria-label="收藏"><Bookmark size={11} strokeWidth={2} /></SideTab>
                  </SideTabs>

                  <MapActions>
                    <MapButton type="button"><Maximize size={11} strokeWidth={2} />全屏</MapButton>
                    <MapButton type="button"><CircleX size={11} strokeWidth={2} />隐藏其它</MapButton>
                  </MapActions>
                  <Legend type="button">图例</Legend>
                </MapCanvas>
                <ScrollTrack><Arrow /><ScrollThumb /><Arrow down /></ScrollTrack>
              </MapRow>

              <ListPanel>
                <ListHead>
                  <ListTitle>车辆实时监控列表</ListTitle>
                  <IconButton type="button" aria-label="收起"><CircleMinus size={12} strokeWidth={2} /></IconButton>
                </ListHead>
                <Filters>
                  <Field>车牌<TextInput placeholder="请输入车牌" /></Field>
                  <Pick label="车辆类型" width={89} text="全部" />
                  <Pick label="分组" width={110} text="请选择分组" muted />
                  <Pick label="状态" width={75} text="全部" />
                  <ActionButton type="button" $color={BLUE} $pad={4}>查 询</ActionButton>
                  <ActionButton type="button" $color="#008000" $pad={3}><ExcelIcon />导出实时信息表</ActionButton>
                </Filters>
                <ListTable>
                  <colgroup>{columns.map((c) => <col key={c.name} width={c.width} />)}</colgroup>
                  <thead>
                    <tr>
                      {columns.map((c) => (
                        <th key={c.name}><HeadCell>{c.name}{c.sort && <SortIcon />}</HeadCell></th>
                      ))}
                    </tr>
                  </thead>
                  <tbody>
                    {rows.map((r) => (
                      <tr key={r[0]}>{r.map((v, i) => <td key={i}>{v}</td>)}</tr>
                    ))}
                  </tbody>
                </ListTable>
                <ListScroll><Arrow /><ListThumb /></ListScroll>
              </ListPanel>
            </Workspace>
            <Gutter><Arrow /></Gutter>
          </Content>
        </Main>
      </Body>

      <SpeedWidget><SpeedGauge /></SpeedWidget>
      <SideHandle />
    </Page>
  );
}
